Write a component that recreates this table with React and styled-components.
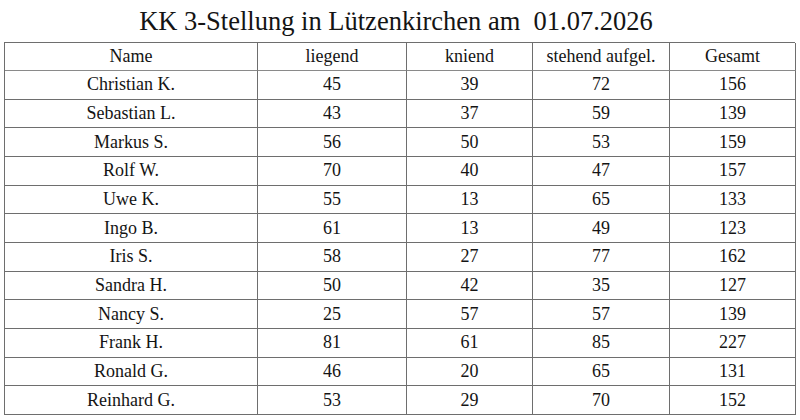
import React from "react";
import styled, { createGlobalStyle } from "styled-components";

const GlobalStyle = createGlobalStyle`
  html, body {
    margin: 0;
    padding: 0;
    background: #ffffff;
  }
  body {
    font-family: "Liberation Serif", "Times New Roman", serif;
    color: #141414;
  }
`;

const rows = [
  ["Christian K.", 45, 39, 72, 156],
  ["Sebastian L.", 43, 37, 59, 139],
  ["Markus S.", 56, 50, 53, 159],
  ["Rolf W.", 70, 40, 47, 157],
  ["Uwe K.", 55, 13, 65, 133],
  ["Ingo B.", 61, 13, 49, 123],
  ["Iris S.", 58, 27, 77, 162],
  ["Sandra H.", 50, 42, 35, 127],
  ["Nancy S.", 25, 57, 57, 139],
  ["Frank H.", 81, 61, 85, 227],
  ["Ronald G.", 46, 20, 65, 131],
  ["Reinhard G.", 53, 29, 70, 152],
];

const headers = ["Name", "liegend", "kniend", "stehend aufgel.", "Gesamt"];

const Page = styled.div`
  width: 800px;
  height: 420px;
  display: flex;
  flex-direction: column;
  overflow: hidden;
`;

const Title = styled.h1`
  margin: 0;
  height: 42px;
  padding: 4px 8px 0 0;
  box-sizing: border-box;
  font-size: 26.5px;
  font-weight: normal;
  line-height: 34px;
  text-align: center;
  white-space: pre;
`;

const Table = styled.div`
  margin-left: 4px;
  width: 791px;
  display: grid;
  grid-template-columns: 253px 149px 126px 137px 126px;
  grid-template-rows: 28px;
  grid-auto-rows: 28.67px;
  border-left: 1px solid #6e6e6e;
  border-top: 1px solid #6e6e6e;
  box-sizing: border-box;
`;

const Cell = styled.div`
  display: flex;
  align-items: center;
  justify-content: center;
  border-right: 1px solid #6e6e6e;
  border-bottom: 1px solid ${(p) => (p.$head ? "#8a8a8a" : "#6e6e6e")};
  font-size: 18px;
  white-space: nowrap;
`;

export default function App() {
  return (
    <>
      <GlobalStyle />
      <Page>
        <Title>KK 3-Stellung in Lützenkirchen am  01.07.2026</Title>
        <Table>
          {headers.map((h) => (
            <Cell key={h} $head>
              {h}
            </Cell>
          ))}
          {rows.map((r) =>
            r.map((v, i) => <Cell key={r[0] + i}>{v}</Cell>)
          )}
        </Table>
      </Page>
    </>
  );
}
